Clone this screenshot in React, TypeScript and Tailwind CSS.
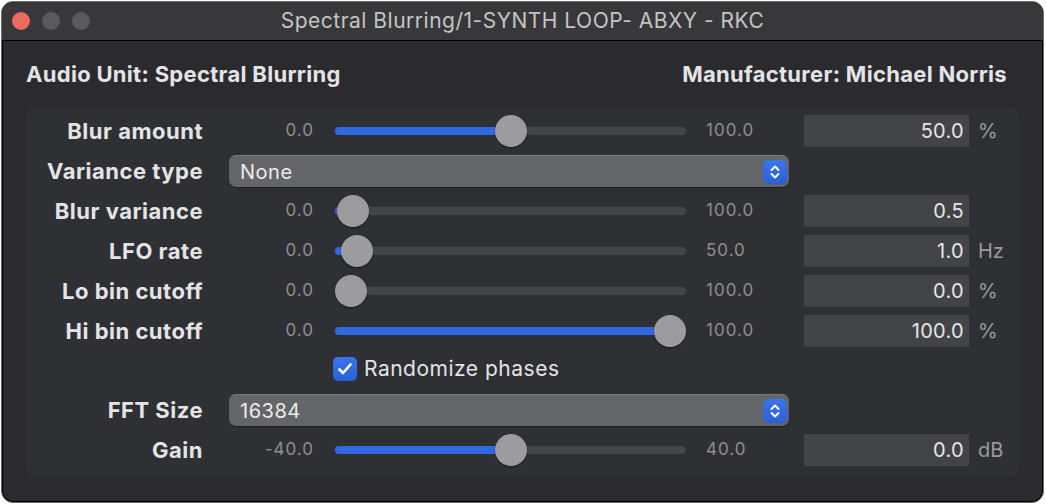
import React from 'react'

const font = { fontFamily: 'Inter, "Noto Sans", sans-serif' }

function Slider({ min, max, pct }: { min: string; max: string; pct: number }) {
  // thumb center runs from 16px to (width - 16px) of the track
  const left = 16 + (319 * pct) / 100
  return (
    <>
      <div className="w-[111px] text-right text-[17px] tracking-[1px] text-[#8e8e92]">{min}</div>
      <div className="relative ml-[21px] h-[8px] w-[351px] rounded-full bg-[#45464a]">
        <div className="absolute left-0 top-0 h-[8px] rounded-full bg-[#3068e0]" style={{ width: left }} />
        <div
          className="absolute top-1/2 h-[32px] w-[32px] -translate-x-1/2 -translate-y-1/2 rounded-full bg-[#9c9c9e] shadow-[0_1px_2px_rgba(0,0,0,0.5)]"
          style={{ left }}
        />
      </div>
      <div className="ml-[20px] w-[98px] text-[17px] tracking-[1px] text-[#8e8e92]">{max}</div>
    </>
  )
}

function ValueBox({ value, unit }: { value: string; unit?: string }) {
  return (
    <>
      <div className="flex h-[32px] w-[165px] items-center justify-end bg-[#434448] pr-[5px] text-[20px] tracking-[0.3px] text-[#e6e6e6]">
        {value}
      </div>
      {unit && <div className="ml-[9px] text-[20px] text-[#9a9a9e]">{unit}</div>}
    </>
  )
}

function Label({ children }: { children: React.ReactNode }) {
  return <div className="w-[177px] text-right text-[22px] font-bold tracking-[0.5px] text-[#e4e4e6]">{children}</div>
}

function SliderRow({ label, min, max, pct, value, unit }: { label: string; min: string; max: string; pct: number; value: string; unit?: string }) {
  return (
    <div className="flex h-[40px] items-center">
      <Label>{label}</Label>
      <Slider min={min} max={max} pct={pct} />
      <ValueBox value={value} unit={unit} />
    </div>
  )
}

function Dropdown({ label, value }: { label: string; value: string }) {
  return (
    <div className="flex h-[40px] items-center">
      <Label>{label}</Label>
      <div className="ml-[26px] flex h-[32px] w-[560px] items-center justify-between rounded-[7px] border-t border-[#7a7b7f] bg-[#646569] pl-[11px] pr-[2px] shadow-[0_1px_1px_rgba(0,0,0,0.4)]">
        <span className="text-[20px] tracking-[0.5px] text-[#ececec]">{value}</span>
        <div className="flex h-[24px] w-[24px] items-center justify-center rounded-[5px] bg-gradient-to-b from-[#3c74ea] to-[#2a5fd8]">
          <svg width="12" height="16" viewBox="0 0 12 16" fill="none" stroke="white" strokeWidth="2" strokeLinecap="round" strokeLinejoin="round">
            <path d="M2.5 6 L6 2.5 L9.5 6" />
            <path d="M2.5 10 L6 13.5 L9.5 10" />
          </svg>
        </div>
      </div>
    </div>
  )
}

export default function App() {
  return (
    <div className="h-[504px] w-[1046px] bg-white p-[1px]" style={font}>
      <div className="flex h-[502px] w-[1043px] flex-col overflow-hidden rounded-[12px] border border-[#6c6c70] bg-[#2b2b2f] shadow-[inset_0_0_0_1px_#000]">
        {/* title bar */}
        <div className="relative flex h-[39px] shrink-0 items-center border-b border-black bg-[#38383b]">
          <div className="absolute left-[10px] top-[10px] flex gap-[12px]">
            <div className="h-[18px] w-[18px] rounded-full bg-[#ec6a5e]" />
            <div className="h-[18px] w-[18px] rounded-full bg-[#5a5a5e]" />
            <div className="h-[18px] w-[18px] rounded-full bg-[#5a5a5e]" />
          </div>
          <div className="w-full text-center text-[21px] tracking-[0.5px] text-[#c4c4c6]">Spectral Blurring/1-SYNTH LOOP- ABXY - RKC</div>
        </div>

        {/* header */}
        <div className="flex h-[66px] shrink-0 items-center justify-between pl-[24px] pr-[36px] text-[22px] font-bold tracking-[0.3px] text-[#e4e4e6]">
          <span>Audio Unit: Spectral Blurring</span>
          <span>Manufacturer: Michael Norris</span>
        </div>

        {/* parameters */}
        <div className="ml-[24px] w-[993px] rounded-[10px] bg-[#2f3034] pb-[7px] pt-[4px]">
          <SliderRow label="Blur amount" min="0.0" max="100.0" pct={50} value="50.0" unit="%" />
          <Dropdown label="Variance type" value="None" />
          <SliderRow label="Blur variance" min="0.0" max="100.0" pct={0.5} value="0.5" />
          <SliderRow label="LFO rate" min="0.0" max="50.0" pct={2} value="1.0" unit="Hz" />
          <SliderRow label="Lo bin cutoff" min="0.0" max="100.0" pct={0} value="0.0" unit="%" />
          <SliderRow label="Hi bin cutoff" min="0.0" max="100.0" pct={100} value="100.0" unit="%" />
          <div className="flex h-[39px] items-center pb-[3px] pl-[307px]">
            <div className="flex h-[24px] w-[24px] items-center justify-center rounded-[5px] bg-gradient-to-b from-[#3c74ea] to-[#2a5fd8]">
              <svg width="16" height="14" viewBox="0 0 16 14" fill="none" stroke="white" strokeWidth="2.6" strokeLinecap="round" strokeLinejoin="round">
                <path d="M2.5 7.5 L6 11 L13.5 2.5" />
              </svg>
            </div>
            <span className="ml-[7px] text-[21px] tracking-[0.5px] text-[#e4e4e6]">Randomize phases</span>
          </div>
          <Dropdown label="FFT Size" value="16384" />
          <SliderRow label="Gain" min="-40.0" max="40.0" pct={50} value="0.0" unit="dB" />
        </div>
      </div>
    </div>
  )
}
